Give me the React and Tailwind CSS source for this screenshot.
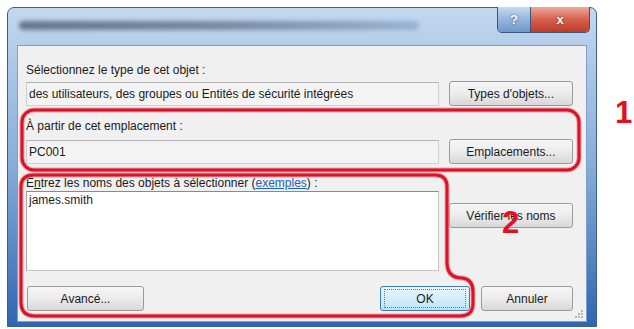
import React from 'react';

function WinButton({ children, className = '', primary = false }) {
  return (
    <div
      className={
        'h-[25px] flex items-center justify-center rounded-[3px] border text-[12px] text-[#1b1b1b] ' +
        (primary
          ? 'border-[#3d7bab] bg-gradient-to-b from-[#eaf6fd] via-[#d4eefb] to-[#bde3f7] '
          : 'border-[#9a9a9a] bg-gradient-to-b from-[#f6f6f6] via-[#ececec] to-[#d8d8d8] ') +
        className
      }
    >
      {primary ? (
        <div className="w-[calc(100%-6px)] h-[19px] flex items-center justify-center border border-dotted border-[#5a7d98]">
          {children}
        </div>
      ) : (
        children
      )}
    </div>
  );
}

function ReadField({ children }) {
  return (
    <div className="w-[415px] h-[24px] flex items-center px-[2px] border border-[#cfcfcf] border-t-[#b5b5b5] bg-[#f3f3f3] text-[12px] text-[#1b1b1b]">
      {children}
    </div>
  );
}

export default function App() {
  return (
    <div className="relative w-[634px] h-[329px] overflow-hidden bg-white pl-[7px] pt-[7px] font-['Liberation_Sans',Arial,sans-serif]">
      {/* window frame */}
      <div className="w-[590px] h-[320px] flex flex-col rounded-t-[7px] border border-[#3b5f8e] bg-gradient-to-b from-[#c3d8ef] via-[#86acd8] to-[#2e66b1] px-[9px] pb-[4px]">
        {/* title bar */}
        <div className="h-[37px] flex items-start justify-between">
          <div className="mt-[13px] ml-[2px] w-[400px] h-[9px] rounded-full bg-gradient-to-r from-[#3f4f63] via-[#5b6b80] to-[#8aa6c6] opacity-70 blur-[2px]" />
          <div className="-mt-px -mr-[3px] flex h-[26px] rounded-b-[5px] border border-t-0 border-[#3a557a] overflow-hidden">
            <div className="w-[33px] flex items-center justify-center bg-gradient-to-b from-[#c7daef] via-[#95b5dc] to-[#6e97c7] border-r border-[#3a557a] text-white font-bold text-[13px] [text-shadow:0_0_2px_#2a4a70]">
              ?
            </div>
            <div className="w-[58px] flex items-center justify-center bg-gradient-to-b from-[#eaaa9c] via-[#d4604b] to-[#c23a26] text-white font-bold text-[13px] [text-shadow:0_0_2px_#6a1a10]">
              x
            </div>
          </div>
        </div>

        {/* client area */}
        <div className="relative flex-1 flex flex-col bg-[#f0f0f0] border border-[#7f9fc8] pl-[8px] pr-[13px] pt-[17px] text-[12px] text-[#1b1b1b]">
          <div className="leading-[14px]">Sélectionnez le type de cet objet :</div>
          <div className="mt-[4px] flex items-center gap-[10px]">
            <ReadField>des utilisateurs, des groupes ou Entités de sécurité intégrées</ReadField>
            <WinButton className="w-[125px]">Types d'objets...</WinButton>
          </div>

          <div className="mt-[13px] leading-[14px]">À partir de cet emplacement :</div>
          <div className="mt-[6px] flex items-center gap-[10px]">
            <ReadField>PC001</ReadField>
            <WinButton className="w-[125px]">Emplacements...</WinButton>
          </div>

          <div className="mt-[12px] leading-[14px]">
            E<span className="underline">n</span>trez les noms des objets à sélectionner (
            <span className="text-[#1a63c4] underline">exemples</span>) :
          </div>
          <div className="mt-[1px] flex items-start gap-[10px]">
            <div className="w-[415px] h-[80px] bg-white border border-[#c4c4c4] border-t-[#8a8a8a] border-l-[#a8a8a8] px-[2px] pt-px leading-[14px]">
              james.smith
            </div>
            <WinButton className="mt-[12px] w-[125px]">Vérifier les noms</WinButton>
          </div>

          <div className="mt-[15px] flex items-center">
            <WinButton className="ml-px w-[117px]">Avancé...</WinButton>
            <div className="flex-1" />
            <WinButton primary className="w-[90px]">OK</WinButton>
            <WinButton className="ml-[11px] w-[92px]">Annuler</WinButton>
          </div>

          {/* size grip */}
          <svg className="absolute right-[2px] bottom-[2px]" width="10" height="10" viewBox="0 0 10 10">
            <g fill="#b8b8b8">
              <rect x="7" y="1" width="2" height="2" />
              <rect x="4" y="4" width="2" height="2" />
              <rect x="7" y="4" width="2" height="2" />
              <rect x="1" y="7" width="2" height="2" />
              <rect x="4" y="7" width="2" height="2" />
              <rect x="7" y="7" width="2" height="2" />
            </g>
          </svg>
        </div>
      </div>

      {/* red annotations */}
      <svg className="absolute left-0 top-0 pointer-events-none" width="634" height="329" viewBox="0 0 634 329">
        <g fill="none" strokeLinejoin="round">
          <rect x="22" y="110" width="557" height="60" rx="12" stroke="#f0a0a8" strokeWidth="5" />
          <rect x="22" y="110" width="557" height="60" rx="12" stroke="#d7142a" strokeWidth="3" />
          <path
            d="M 34 175 H 435 Q 447 175 447 187 V 262 Q 447 278 462 278 Q 473 279 473 292 V 303 Q 473 316 460 316 H 35 Q 21 316 21 302 V 187 Q 21 175 34 175 Z"
            stroke="#f0a0a8"
            strokeWidth="5"
          />
          <path
            d="M 34 175 H 435 Q 447 175 447 187 V 262 Q 447 278 462 278 Q 473 279 473 292 V 303 Q 473 316 460 316 H 35 Q 21 316 21 302 V 187 Q 21 175 34 175 Z"
            stroke="#d7142a"
            strokeWidth="3"
          />
        </g>
      </svg>
      <div className="absolute left-[615px] top-[97px] text-[31px] leading-none font-bold text-[#e3101f]">1</div>
      <div className="absolute left-[502px] top-[207px] text-[31px] leading-none font-bold text-[#e3101f]">2</div>
    </div>
  );
}
